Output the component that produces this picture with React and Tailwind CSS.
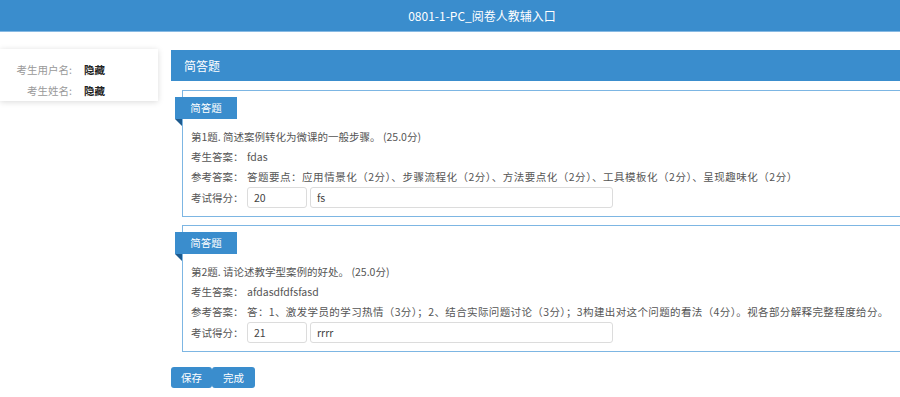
import React from "react";

const F = { fontFamily: '"Noto Sans CJK SC", "Noto Sans", sans-serif' };

function Box({ title, answer, reference, score, comment, track }) {
  return (
    <div className="border border-[#7db6e3] pt-[6px] pb-[8px]">
      <div className="relative ml-[-8px] w-[62px] h-[22px] bg-[#3a8dcd] text-white text-[10.5px] flex items-center justify-center">
        简答题
        <div className="absolute left-0 top-full w-0 h-0 border-t-[7px] border-l-[7px] border-t-[#1d5a8e] border-l-transparent" />
      </div>
      <div className="mt-[8px] pl-[8px] text-[10.5px] text-[#555]">
        <div className="h-[20px] leading-[20px] whitespace-nowrap">{title}</div>
        <div className="h-[20px] leading-[20px] flex whitespace-nowrap">
          <span className="w-[56px] shrink-0">考生答案：</span>
          <span>{answer}</span>
        </div>
        <div className="h-[20px] leading-[20px] flex whitespace-nowrap">
          <span className="w-[56px] shrink-0">参考答案：</span>
          <span className={track}>{reference}</span>
        </div>
        <div className="h-[21px] flex items-center">
          <span className="w-[56px] shrink-0">考试得分：</span>
          <div className="w-[60px] h-[21px] border border-[#dcdcdc] rounded-[3px] pl-[6px] flex items-center text-[#444]">{score}</div>
          <div className="ml-[3px] w-[303px] h-[21px] border border-[#dcdcdc] rounded-[3px] pl-[6px] flex items-center text-[#444]">{comment}</div>
        </div>
      </div>
    </div>
  );
}

export default function App() {
  return (
    <div className="w-[900px] h-[397px] overflow-hidden bg-white" style={F}>
      <div className="w-[964px]">
        <div className="h-[32px] bg-[#3a8dcd] border-b border-[#86b9e3] flex items-center justify-center text-white text-[12px]">
          0801-1-PC_阅卷人教辅入口
        </div>
        <div className="flex items-start pt-[17px]">
          <div className="w-[158px] h-[52px] bg-white shadow-[0_1px_6px_rgba(0,0,0,0.15)] pt-[10px] text-[10.5px]">
            <div className="flex h-[21px] items-center">
              <span className="w-[72px] text-right text-[#999]">考生用户名:</span>
              <span className="ml-[12px] font-bold text-[#222]">隐藏</span>
            </div>
            <div className="flex h-[21px] items-center">
              <span className="w-[72px] text-right text-[#999]">考生姓名:</span>
              <span className="ml-[12px] font-bold text-[#222]">隐藏</span>
            </div>
          </div>
          <div className="ml-[13px] mt-[1px] flex-1 mr-[10px]">
            <div className="h-[31px] bg-[#3a8dcd] pl-[13px] flex items-center text-white text-[12px]">简答题</div>
            <div className="px-[11px] pt-[9px]">
              <Box
                title="第1题. 简述案例转化为微课的一般步骤。 (25.0分)"
                answer="fdas"
                reference="答题要点：应用情景化（2分）、步骤流程化（2分）、方法要点化（2分）、工具模板化（2分）、呈现趣味化（2分）"
                score="20"
                comment="fs"
                track="tracking-[0.52px]"
              />
              <div className="h-[8px]" />
              <Box
                title="第2题. 请论述教学型案例的好处。 (25.0分)"
                answer="afdasdfdfsfasd"
                reference="答：1、激发学员的学习热情（3分）；2、结合实际问题讨论（3分）；3构建出对这个问题的看法（4分）。视各部分解释完整程度给分。"
                score="21"
                comment="rrrr"
                track="tracking-[0.38px]"
              />
            </div>
            <div className="mt-[15px] flex">
              <button className="w-[41px] h-[21px] rounded-[3px] bg-[#3a8dcd] text-white text-[10.5px]">保存</button>
              <button className="w-[43px] h-[21px] rounded-[3px] bg-[#3a8dcd] text-white text-[10.5px]">完成</button>
            </div>
          </div>
        </div>
      </div>
    </div>
  );
}
